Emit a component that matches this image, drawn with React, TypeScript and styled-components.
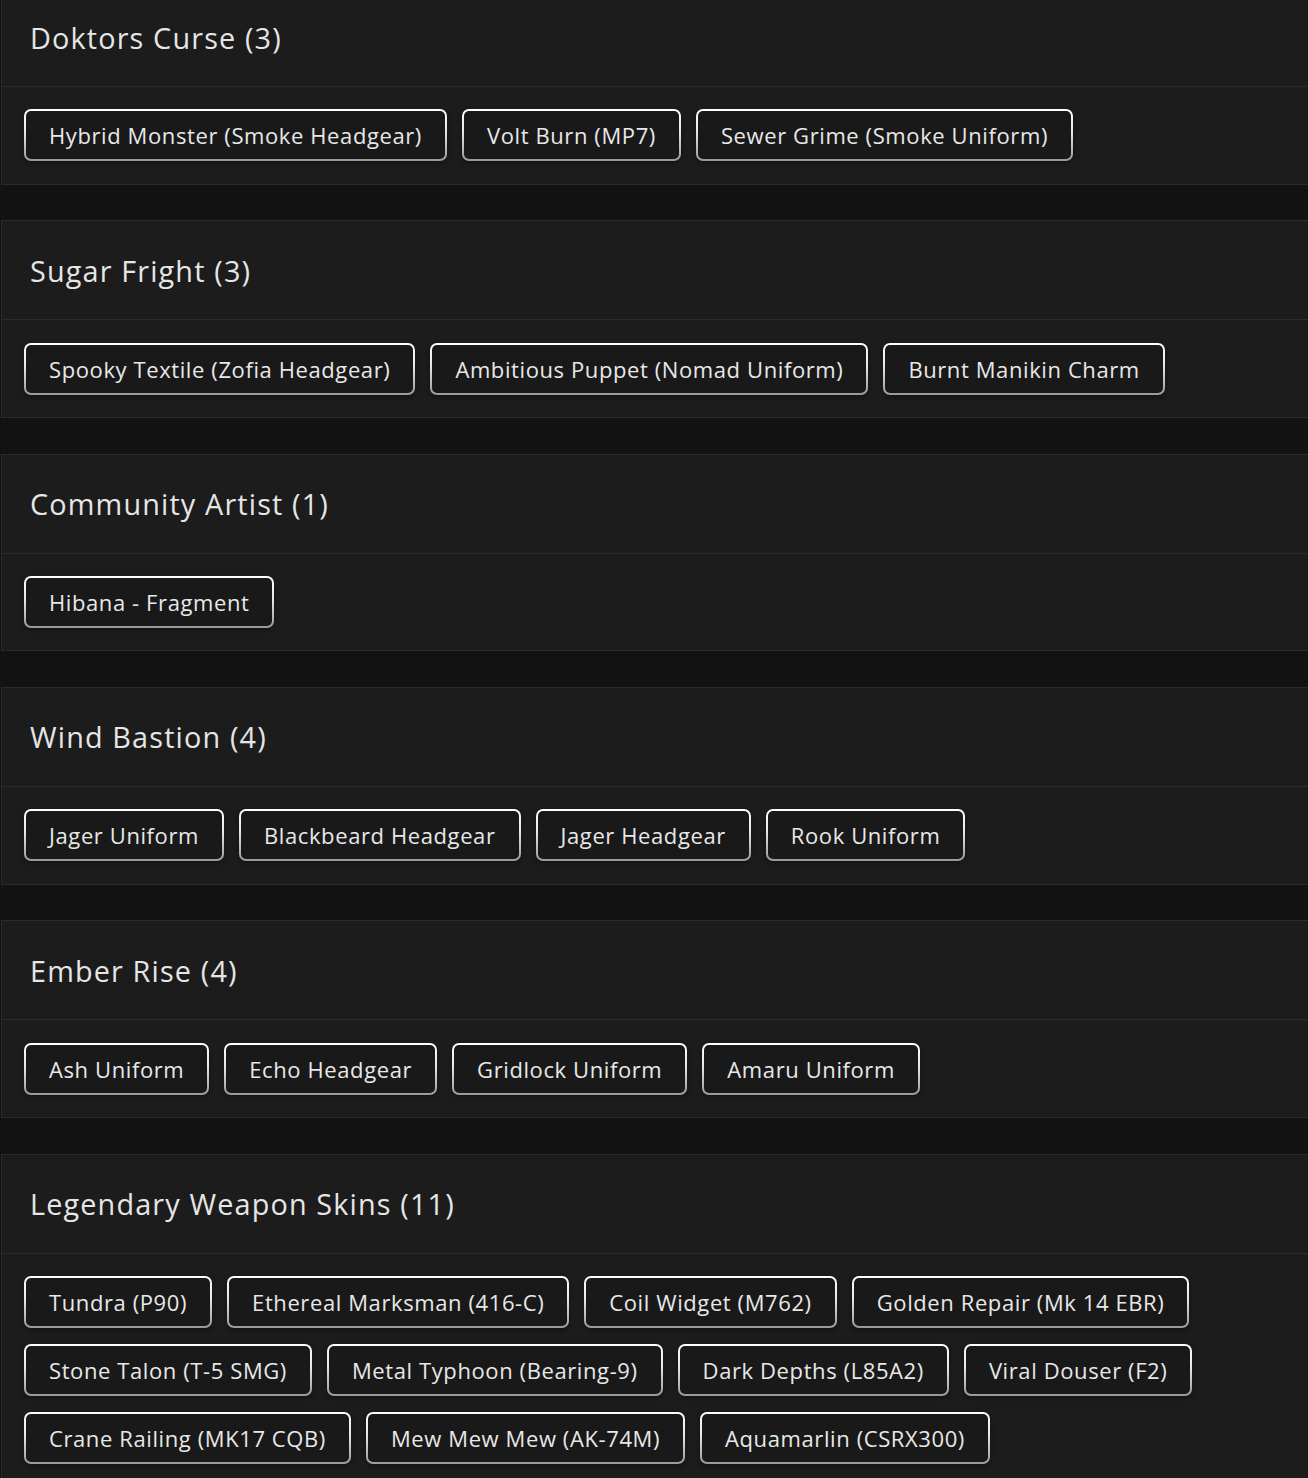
import React from "react";
import styled, { createGlobalStyle } from "styled-components";

const GlobalStyle = createGlobalStyle`
  html, body {
    margin: 0;
    padding: 0;
    background: #121212;
    overflow: hidden;
  }
  body {
    font-family: "Open Sans", "Noto Sans", sans-serif;
    color: #e6e6e6;
  }
`;

const Page = styled.main`
  display: flex;
  flex-direction: column;
  gap: 35.67px;
  margin-top: -13px;
  padding-left: 1px;
  width: 1312px;
`;

const Card = styled.section`
  background: #1c1c1c;
  border: 1px solid #2b2b2b;
  display: flex;
  flex-direction: column;
`;

const Header = styled.header`
  height: 98px;
  display: flex;
  align-items: center;
  padding: 0 28px;
  border-bottom: 1px solid #2b2b2b;
`;

const Title = styled.h2`
  margin: 0;
  font-size: 28.8px;
  font-weight: 500;
  color: #e6e6e6;
  letter-spacing: 1.15px;
`;

const Body = styled.div`
  display: flex;
  flex-wrap: wrap;
  gap: 16px 15px;
  padding: 22.33px 22px;
`;

const Tag = styled.span`
  box-sizing: border-box;
  height: 52px;
  display: inline-flex;
  align-items: center;
  padding: 0 23px;
  border: 2px solid transparent;
  border-radius: 7px;
  background:
    linear-gradient(#191919, #191919) padding-box,
    linear-gradient(#ffffff 0%, #e6e6e6 45%, #999999 100%) border-box;
  box-shadow: 0 2px 4px rgba(0, 0, 0, 0.35);
  font-size: 22px;
  font-weight: 500;
  color: #e8e8e8;
  letter-spacing: 0.6px;
  white-space: nowrap;
`;

const groups: { title: string; items: string[] }[] = [
  {
    title: "Doktors Curse",
    items: ["Hybrid Monster (Smoke Headgear)", "Volt Burn (MP7)", "Sewer Grime (Smoke Uniform)"],
  },
  {
    title: "Sugar Fright",
    items: ["Spooky Textile (Zofia Headgear)", "Ambitious Puppet (Nomad Uniform)", "Burnt Manikin Charm"],
  },
  { title: "Community Artist", items: ["Hibana - Fragment"] },
  {
    title: "Wind Bastion",
    items: ["Jager Uniform", "Blackbeard Headgear", "Jager Headgear", "Rook Uniform"],
  },
  {
    title: "Ember Rise",
    items: ["Ash Uniform", "Echo Headgear", "Gridlock Uniform", "Amaru Uniform"],
  },
  {
    title: "Legendary Weapon Skins",
    items: [
      "Tundra (P90)",
      "Ethereal Marksman (416-C)",
      "Coil Widget (M762)",
      "Golden Repair (Mk 14 EBR)",
      "Stone Talon (T-5 SMG)",
      "Metal Typhoon (Bearing-9)",
      "Dark Depths (L85A2)",
      "Viral Douser (F2)",
      "Crane Railing (MK17 CQB)",
      "Mew Mew Mew (AK-74M)",
      "Aquamarlin (CSRX300)",
    ],
  },
];

export default function App() {
  return (
    <>
      <GlobalStyle />
      <Page>
        {groups.map((g) => (
          <Card key={g.title}>
            <Header>
              <Title>
                {g.title} ({g.items.length})
              </Title>
            </Header>
            <Body>
              {g.items.map((item) => (
                <Tag key={item}>{item}</Tag>
              ))}
            </Body>
          </Card>
        ))}
      </Page>
    </>
  );
}
